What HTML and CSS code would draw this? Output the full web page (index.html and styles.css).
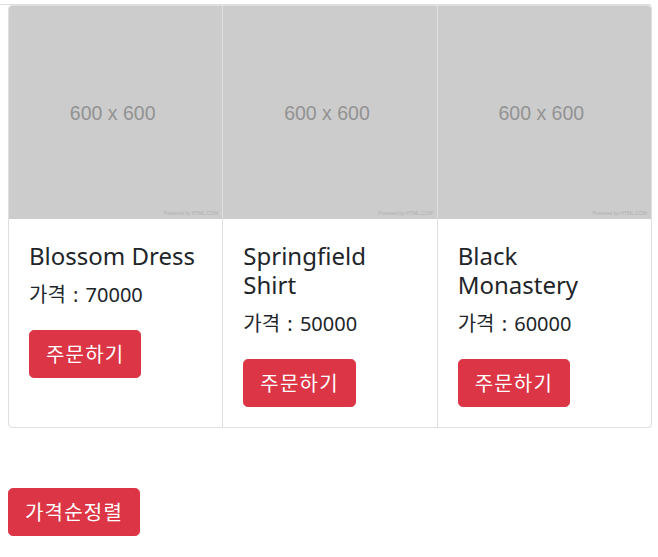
FILE: index.html
```html
<!DOCTYPE html>
<html lang="ko">
<head>
<meta charset="utf-8">
<title>Shop</title>
<link rel="stylesheet" href="styles.css">
</head>
<body>
<div class="topline"></div>
<div class="page">
  <div class="card-group">
    <div class="card">
      <div class="thumb"><span class="ph">600 x 600</span><span class="pw">Powered by HTML.COM</span></div>
      <div class="card-body">
        <h4 class="title">Blossom Dress</h4>
        <p class="price">가격 : 70000</p>
        <button class="btn">주문하기</button>
      </div>
    </div>
    <div class="card">
      <div class="thumb"><span class="ph">600 x 600</span><span class="pw">Powered by HTML.COM</span></div>
      <div class="card-body">
        <h4 class="title">Springfield Shirt</h4>
        <p class="price">가격 : 50000</p>
        <button class="btn">주문하기</button>
      </div>
    </div>
    <div class="card">
      <div class="thumb"><span class="ph">600 x 600</span><span class="pw">Powered by HTML.COM</span></div>
      <div class="card-body">
        <h4 class="title">Black Monastery</h4>
        <p class="price">가격 : 60000</p>
        <button class="btn">주문하기</button>
      </div>
    </div>
  </div>
  <button class="btn sort">가격순정렬</button>
</div>
</body>
</html>
```
FILE: styles.css
```css
* { box-sizing: border-box; }
html, body { margin: 0; padding: 0; background: #fff; }
body {
  font-family: "Noto Sans", "Noto Sans CJK KR", sans-serif;
  color: #212529;
  font-size: 16px;
}
.topline {
  margin-top: 4px;
  margin-right: 7px;
  height: 1px;
  background: #dedede;
}
.page {
  padding: 0 6px 0 8px;
}
.card-group {
  display: flex;
  width: 644px;
}
.card {
  flex: 1 0 0%;
  display: flex;
  flex-direction: column;
  border: 1px solid #dfdfdf;
  background: #fff;
  min-width: 0;
}
.card + .card { border-left: 0; }
.card:first-child { border-radius: 4px 0 0 4px; }
.card:last-child { border-radius: 0 4px 4px 0; }
.card:first-child .thumb { border-top-left-radius: 3px; }
.card:last-child .thumb { border-top-right-radius: 3px; }
.thumb {
  position: relative;
  aspect-ratio: 1 / 1;
  background: #cccccc;
  display: flex;
  align-items: center;
  justify-content: center;
  padding: 2px 6px 0 0;
}
.ph {
  font-family: "Liberation Sans", Arial, sans-serif;
  font-size: 19.5px;
  color: #929292;
}
.pw {
  position: absolute;
  right: 4px;
  bottom: 3px;
  font-family: "Liberation Sans", Arial, sans-serif;
  font-size: 5px;
  line-height: 5px;
  color: #b0b0b0;
}
.card-body {
  padding: 23px 20px 20px;
  flex: 1 1 auto;
}
.title {
  margin: 0 0 12px;
  font-size: 24px;
  font-weight: 400;
  line-height: 28.8px;
}
.price {
  margin: 0 0 23px;
  font-size: 20px;
  line-height: 24px;
  word-spacing: 2px;
}
.btn {
  display: inline-block;
  font-family: "Noto Sans", "Noto Sans CJK KR", sans-serif;
  font-size: 20px;
  line-height: 30px;
  padding: 9px 16px 7px;
  letter-spacing: 1.2px;
  color: #fff;
  background: #dc3545;
  border: 1px solid #dc3545;
  border-radius: 4.8px;
  cursor: pointer;
}
.sort {
  margin-top: 60px;
}
```
